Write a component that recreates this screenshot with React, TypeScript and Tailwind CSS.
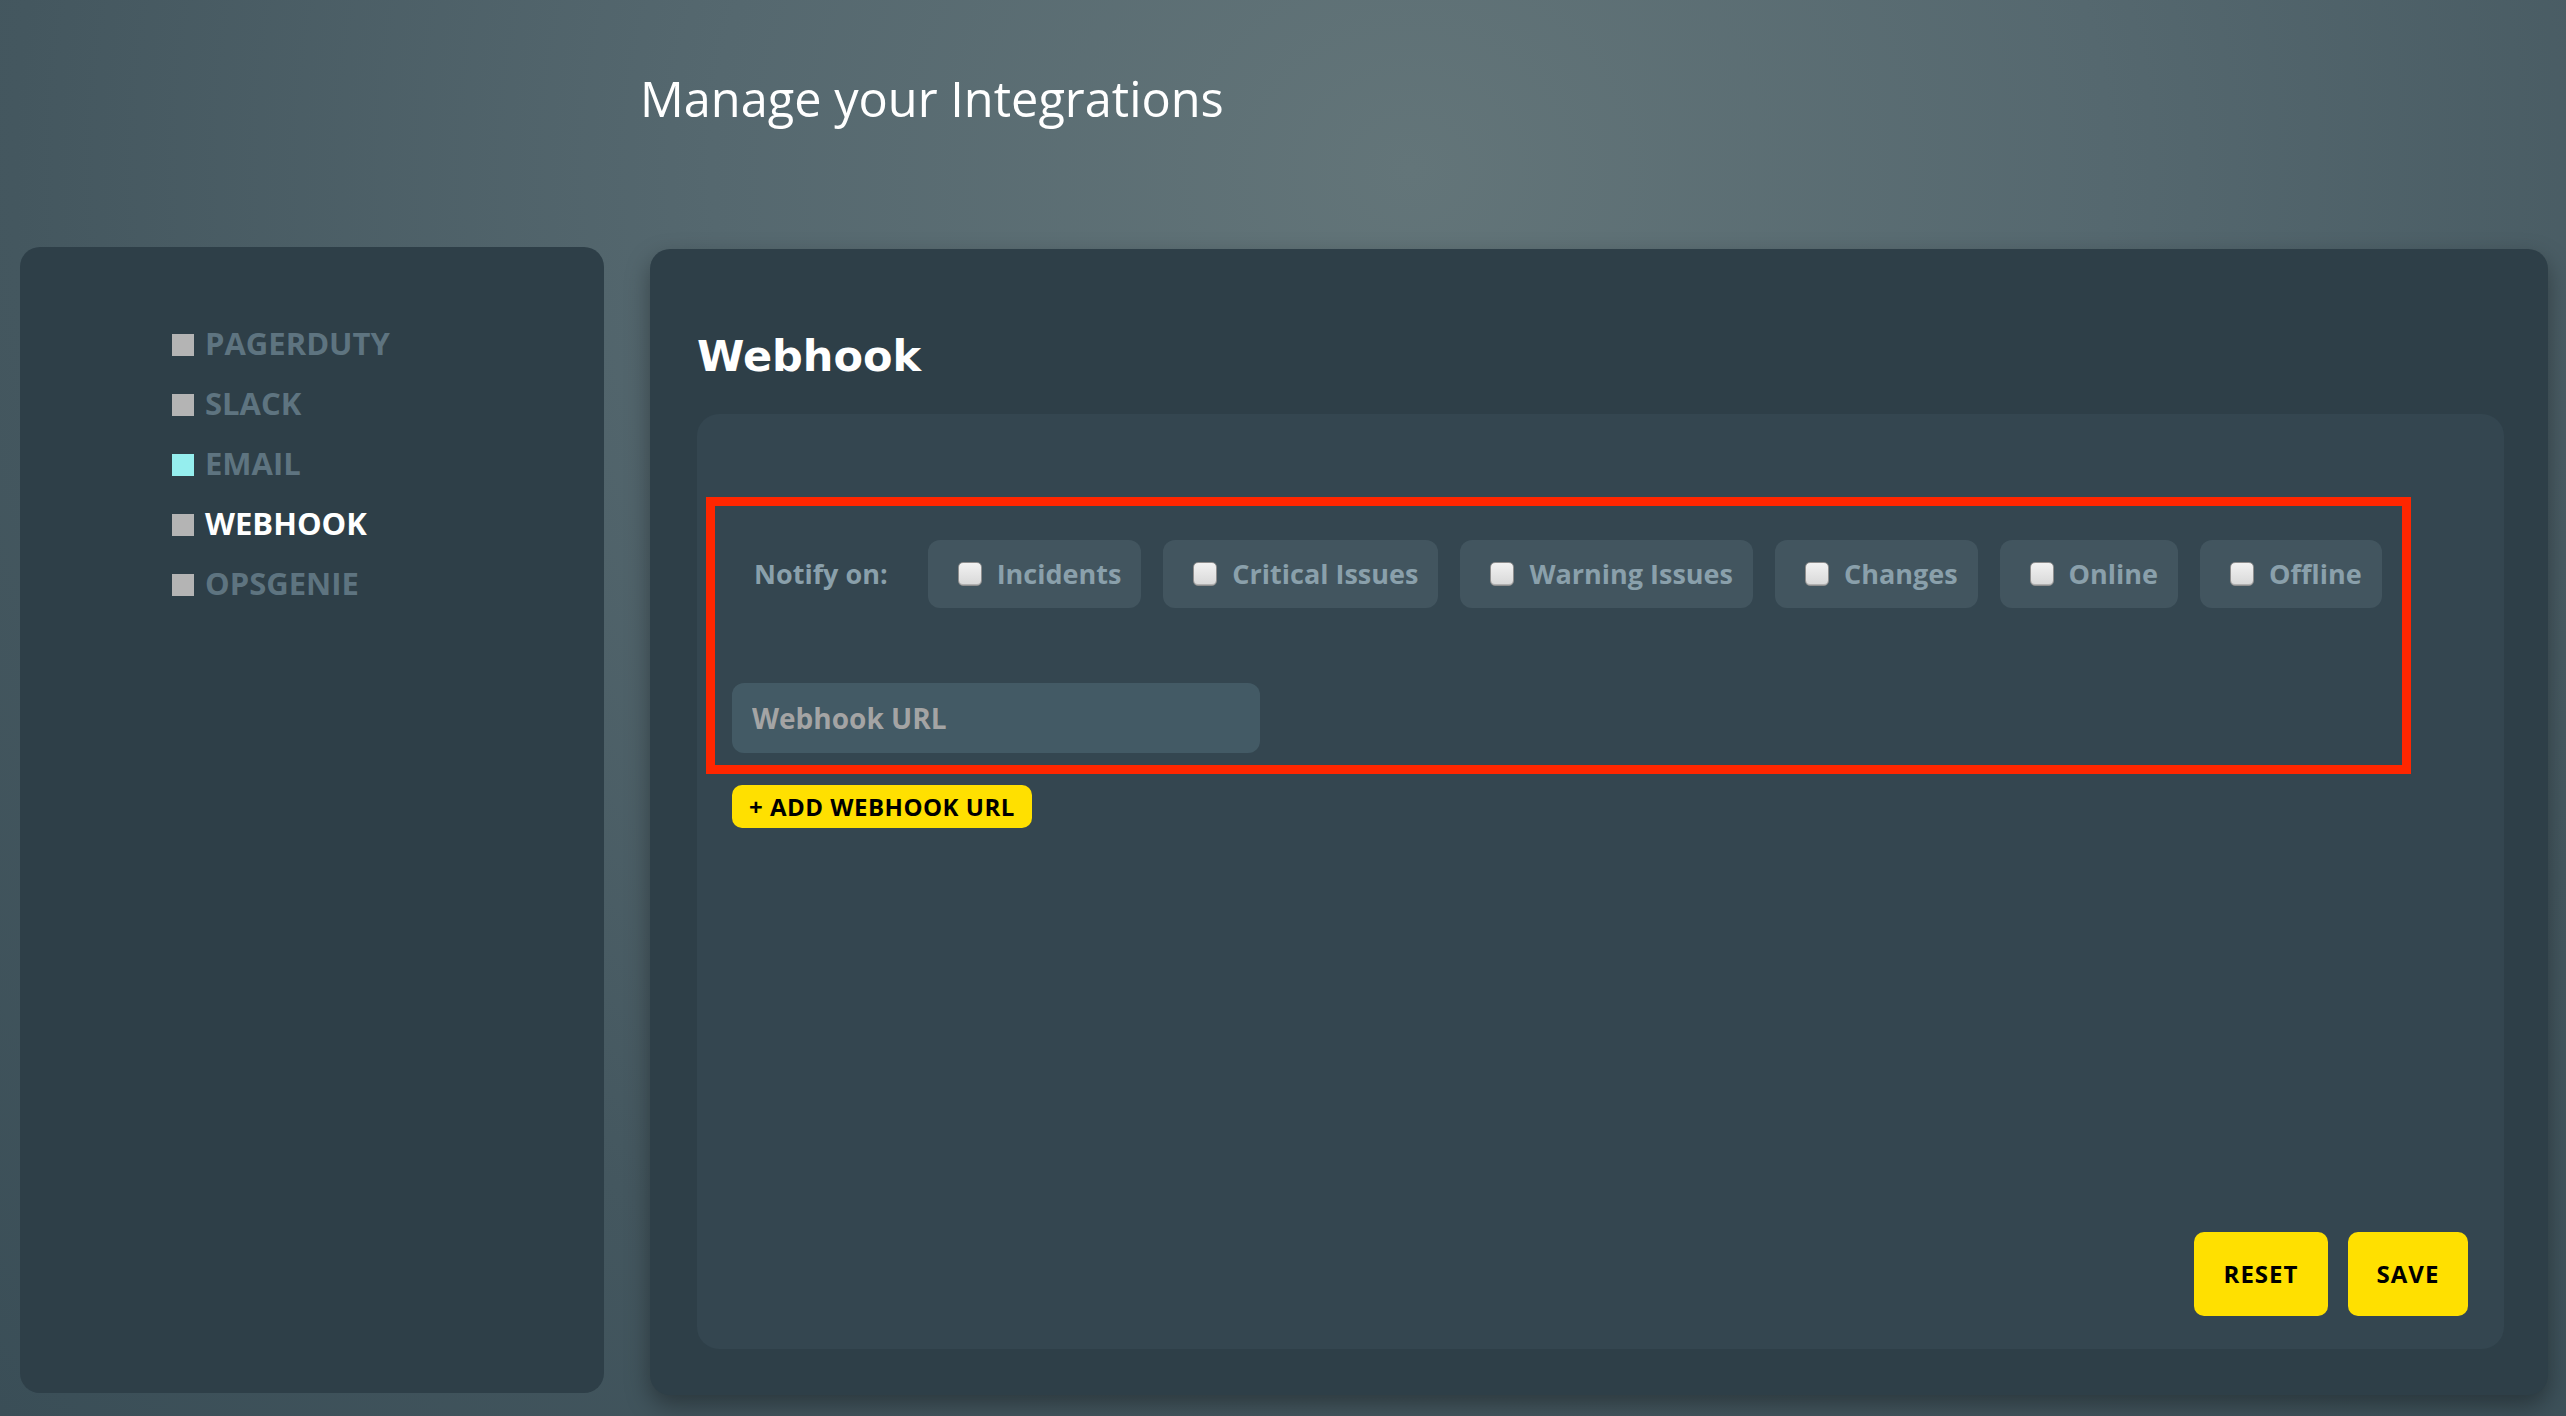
import { useState } from 'react';

const integrations = [
  { name: 'PAGERDUTY', color: 'bg-[#b4b4b4]', active: false },
  { name: 'SLACK', color: 'bg-[#b4b4b4]', active: false },
  { name: 'EMAIL', color: 'bg-[#95eeee]', active: false },
  { name: 'WEBHOOK', color: 'bg-[#b4b4b4]', active: true },
  { name: 'OPSGENIE', color: 'bg-[#b4b4b4]', active: false },
];

const events = ['Incidents', 'Critical Issues', 'Warning Issues', 'Changes', 'Online', 'Offline'];

// mac style checkbox look
function Check() {
  return (
    <span className="block w-[24px] h-[24px] shrink-0 rounded-[5px] border border-[#8e8e8e] bg-gradient-to-b from-[#f2f2f2] to-[#d8d8d8] shadow-[inset_0_-1px_0_#b0b0b0]" />
  );
}

export default function App() {
  const [url, setUrl] = useState('');

  return (
    <div className="h-[1416px] w-full overflow-hidden bg-[radial-gradient(ellipse_at_55%_12%,#637579_0%,#55686f_35%,#44575f_70%,#3a4e57_100%)] font-['Open_Sans',sans-serif]">
      {/* header */}
      <h1 className="pt-[66px] pl-[640px] text-[48.7px] leading-[65px] font-normal text-white">
        Manage your Integrations
      </h1>

      <div className="mt-[116px] flex items-start pl-[20px] gap-[46px]">
        {/* sidebar */}
        <nav className="w-[584px] h-[1146px] shrink-0 rounded-[20px] bg-[#2e3f48] pt-[66px] pl-[152px]">
          <ul>
            {integrations.map((item) => (
              <li key={item.name} className="flex items-center h-[60px] gap-[11px]">
                <span className={`block w-[22px] h-[22px] mt-1 ${item.color}`} />
                <span
                  className={`text-[31px] font-bold ${item.active ? 'text-white' : 'text-[#5e7480]'}`}
                >
                  {item.name}
                </span>
              </li>
            ))}
          </ul>
        </nav>

        {/* main panel */}
        <main className="mt-[2px] w-[1898px] h-[1146px] shrink-0 rounded-[20px] bg-[#2e3f48] shadow-[0_10px_24px_rgba(0,0,0,0.35)] pt-[82px] pl-[47px] pr-[44px] pb-[46px] flex flex-col">
          <h2 className="font-['DejaVu_Sans',sans-serif] text-[43px] leading-[50px] font-bold text-white mb-[33px]">
            Webhook
          </h2>

          <section className="flex-1 rounded-[22px] bg-[#344650] pt-[83px] pl-[9px] pr-[36px] pb-[33px] flex flex-col">
            <div className="mr-[57px] border-[9px] border-[#ff2600] pt-[34px] pl-[17px] pb-[12px]">
              <div className="flex items-center pl-[22px]">
                <span className="text-[27px] font-bold text-[#8aa0ab] mr-[40px]">Notify on:</span>
                <div className="flex gap-[22px]">
                  {events.map((ev) => (
                    <label
                      key={ev}
                      className="flex items-center h-[68px] pl-[30px] pr-[20px] gap-[15px] rounded-[12px] bg-[#42555f]"
                    >
                      <Check />
                      <span className="text-[27px] font-bold text-[#8aa0ab]">{ev}</span>
                    </label>
                  ))}
                </div>
              </div>

              <input
                value={url}
                onChange={(e) => setUrl(e.target.value)}
                placeholder="Webhook URL"
                className="mt-[75px] block w-[528px] h-[70px] rounded-[12px] bg-[#435a65] px-[20px] text-[28px] font-bold text-white placeholder:text-[#a4a4a4] outline-none"
              />
            </div>

            <button className="mt-[11px] ml-[26px] self-start h-[43px] px-[17px] rounded-[10px] bg-[#ffe000] text-[24px] tracking-[0.5px] font-bold text-black leading-none">
              + ADD WEBHOOK URL
            </button>

            <div className="mt-auto self-end flex gap-[20px]">
              <button className="w-[134px] h-[84px] rounded-[10px] bg-[#ffe000] text-[24px] font-bold tracking-[1px] text-black">
                RESET
              </button>
              <button className="w-[120px] h-[84px] rounded-[10px] bg-[#ffe000] text-[24px] font-bold tracking-[1px] text-black">
                SAVE
              </button>
            </div>
          </section>
        </main>
      </div>
    </div>
  );
}
